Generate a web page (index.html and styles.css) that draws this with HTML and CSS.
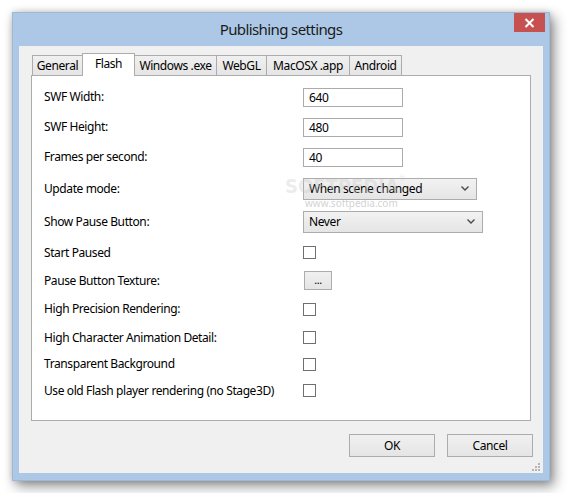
FILE: index.html
```html
<!DOCTYPE html>
<html>
<head>
<meta charset="utf-8">
<link rel="stylesheet" href="styles.css">
</head>
<body>
<div class="window">
  <div class="titlebar">
    <div></div>
    <div class="title">Publishing settings</div>
    <div class="close-wrap">
      <div class="close">
        <svg width="11" height="10" viewBox="0 0 11 10"><path d="M1.5 1 L9.5 9 M9.5 1 L1.5 9" stroke="#fff" stroke-width="2" fill="none"/></svg>
      </div>
    </div>
  </div>
  <div class="client">
    <div class="tabs">
      <div class="tab t-general">General</div>
      <div class="tab t-flash active">Flash</div>
      <div class="tab t-win">Windows .exe</div>
      <div class="tab t-webgl">WebGL</div>
      <div class="tab t-mac">MacOSX .app</div>
      <div class="tab t-android">Android</div>
    </div>
    <div class="panel">
      <div class="form">
        <div class="label">SWF Width:</div>
        <div class="ctrl"><div class="textbox">640</div></div>
        <div class="label">SWF Height:</div>
        <div class="ctrl"><div class="textbox">480</div></div>
        <div class="label">Frames per second:</div>
        <div class="ctrl"><div class="textbox">40</div></div>
        <div class="label">Update mode:</div>
        <div class="ctrl">
          <div class="dropdown dd-update"><span>When scene changed</span>
            <svg class="chev" width="8" height="5" viewBox="0 0 8 5"><path d="M0.5 0.5 L4 4 L7.5 0.5" stroke="#4a4a4a" stroke-width="1.4" fill="none"/></svg>
          </div>
        </div>
        <div class="label">Show Pause Button:</div>
        <div class="ctrl">
          <div class="dropdown dd-pause"><span>Never</span>
            <svg class="chev" width="8" height="5" viewBox="0 0 8 5"><path d="M0.5 0.5 L4 4 L7.5 0.5" stroke="#4a4a4a" stroke-width="1.4" fill="none"/></svg>
          </div>
        </div>
        <div class="label">Start Paused</div>
        <div class="ctrl"><div class="checkbox"></div></div>
        <div class="label">Pause Button Texture:</div>
        <div class="ctrl"><div class="browse">...</div></div>
        <div class="label">High Precision Rendering:</div>
        <div class="ctrl"><div class="checkbox"></div></div>
        <div class="label">High Character Animation Detail:</div>
        <div class="ctrl"><div class="checkbox"></div></div>
        <div class="label">Transparent Background</div>
        <div class="ctrl"><div class="checkbox"></div></div>
        <div class="label">Use old Flash player rendering (no Stage3D)</div>
        <div class="ctrl"><div class="checkbox"></div></div>
      </div>
      <div class="watermark">SOFTPEDIA<sup>®</sup></div>
      <div class="watermark-url">www.softpedia.com</div>
    </div>
    <div class="buttons">
      <div class="btn">OK</div>
      <div class="btn">Cancel</div>
    </div>
    <svg class="grip" width="9" height="9" viewBox="0 0 9 9">
      <rect x="6" y="0" width="2" height="2" fill="#b5b5b5"/>
      <rect x="3" y="3" width="2" height="2" fill="#b5b5b5"/>
      <rect x="6" y="3" width="2" height="2" fill="#b5b5b5"/>
      <rect x="0" y="6" width="2" height="2" fill="#b5b5b5"/>
      <rect x="3" y="6" width="2" height="2" fill="#b5b5b5"/>
      <rect x="6" y="6" width="2" height="2" fill="#b5b5b5"/>
    </svg>
  </div>
</div>
</body>
</html>
```

FILE: styles.css
```css
html, body {
  margin: 0;
  background: #ffffff;
}
body {
  padding: 12px;
  font-family: "Noto Sans", "Open Sans", sans-serif;
  font-size: 12px;
  letter-spacing: -0.4px;
  color: #000;
}
.window {
  width: 538px;
  height: 469px;
  box-sizing: border-box;
  background: #adc8e7;
  border: 1px solid #9fb8d6;
  padding: 0 6px 7px 6px;
  display: flex;
  flex-direction: column;
  box-shadow: 4px 5px 12px rgba(0, 0, 0, 0.45), 0 0 6px rgba(0, 0, 0, 0.15);
}
.titlebar {
  height: 33px;
  display: grid;
  grid-template-columns: 1fr auto 1fr;
  align-items: start;
}
.title {
  font-size: 15px;
  letter-spacing: -0.6px;
  color: #1a1a1a;
  padding-top: 6px;
  line-height: 20px;
}
.close-wrap {
  display: flex;
  justify-content: flex-end;
  margin-right: -2px;
}
.close {
  width: 31px;
  height: 19px;
  background: #c75050;
  display: flex;
  align-items: center;
  justify-content: center;
}
.client {
  flex: 1;
  background: #f0f0f0;
  padding: 0 12px;
  position: relative;
  display: flex;
  flex-direction: column;
}
.tabs {
  margin-top: 7px;
  height: 22px;
  display: flex;
  align-items: flex-end;
  padding-left: 1px;
  position: relative;
  z-index: 1;
}
.tab {
  box-sizing: border-box;
  height: 20px;
  border: 1px solid #acacac;
  border-bottom: none;
  background: linear-gradient(#f0f0f0, #e5e5e5);
  margin-left: -1px;
  display: flex;
  align-items: center;
  justify-content: center;
  line-height: 16px;
  padding-top: 1px;
}
.tab:first-child { margin-left: 0; }
.tab.active {
  height: 23px;
  margin-bottom: -1px;
  background: #ffffff;
  align-self: flex-end;
  padding-bottom: 4px;
  position: relative;
  z-index: 2;
}
.t-general { width: 51px; }
.t-flash { width: 53px; }
.t-win { width: 83px; }
.t-webgl { width: 51px; }
.t-mac { width: 84px; }
.t-android { width: 53px; }
.panel {
  box-sizing: border-box;
  width: 500px;
  height: 346px;
  border: 1px solid #acacac;
  background: #ffffff;
  position: relative;
  padding: 6px 12px 0 12px;
}
.form {
  display: grid;
  grid-template-columns: 259px 1fr;
  grid-template-rows: 30px 30px 30px 33px 33px 29px 27px 30px 27px 26px 27px;
  align-items: center;
}
.label {
  line-height: 16px;
  white-space: nowrap;
}
.ctrl {
  display: flex;
  align-items: center;
}
.textbox {
  box-sizing: border-box;
  width: 100px;
  height: 19px;
  border: 1px solid #ababab;
  background: #fff;
  padding-left: 5px;
  line-height: 17px;
}
.dropdown {
  box-sizing: border-box;
  height: 22px;
  border: 1px solid #acacac;
  background: linear-gradient(#f2f2f2, #e5e5e5);
  display: flex;
  align-items: center;
  justify-content: space-between;
  padding: 0 7px 0 5px;
  line-height: 16px;
}
.dd-update { width: 174px; }
.dd-pause { width: 180px; }
.checkbox {
  box-sizing: border-box;
  width: 13px;
  height: 13px;
  border: 1px solid #707070;
  background: #fff;
}
.browse {
  box-sizing: border-box;
  width: 28px;
  height: 19px;
  margin-left: 1px;
  border: 1px solid #acacac;
  background: linear-gradient(#f0f0f0, #e5e5e5);
  display: flex;
  align-items: center;
  justify-content: center;
  font-size: 11px;
  line-height: 12px;
  padding-bottom: 2px;
}
.watermark {
  position: absolute;
  left: 253px;
  top: 99px;
  font-family: "DejaVu Sans Condensed", "DejaVu Sans", sans-serif;
  font-weight: bold;
  font-size: 20px;
  letter-spacing: 0;
  line-height: 22px;
  color: rgba(200, 200, 200, 0.35);
  pointer-events: none;
}
.watermark sup {
  font-size: 8px;
  vertical-align: top;
  line-height: 8px;
}
.watermark-url {
  position: absolute;
  left: 273px;
  top: 121px;
  font-size: 10px;
  letter-spacing: 0;
  line-height: 12px;
  color: rgba(170, 170, 170, 0.55);
  pointer-events: none;
}
.buttons {
  display: flex;
  justify-content: flex-end;
  gap: 12px;
  margin-top: 13px;
  margin-right: -2px;
}
.btn {
  box-sizing: border-box;
  width: 86px;
  height: 23px;
  border: 1px solid #acacac;
  background: linear-gradient(#f0f0f0, #e5e5e5);
  display: flex;
  align-items: center;
  justify-content: center;
  line-height: 16px;
}
.grip {
  position: absolute;
  right: 2px;
  bottom: 1px;
}
```
